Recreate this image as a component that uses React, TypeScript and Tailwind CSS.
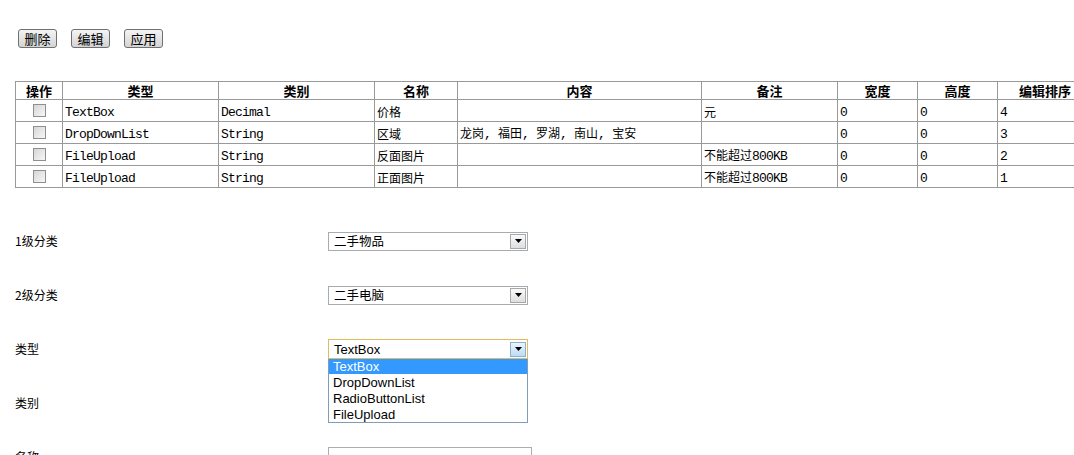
import React from "react";

type Row = {
  type: string;
  kind: string;
  name: string;
  content: string;
  note: string;
  width: string;
  height: string;
  order: string;
};

const rows: Row[] = [
  { type: "TextBox", kind: "Decimal", name: "价格", content: "", note: "元", width: "0", height: "0", order: "4" },
  { type: "DropDownList", kind: "String", name: "区域", content: "龙岗, 福田, 罗湖, 南山, 宝安", note: "", width: "0", height: "0", order: "3" },
  { type: "FileUpload", kind: "String", name: "反面图片", content: "", note: "不能超过800KB", width: "0", height: "0", order: "2" },
  { type: "FileUpload", kind: "String", name: "正面图片", content: "", note: "不能超过800KB", width: "0", height: "0", order: "1" },
];

const headers = ["操作", "类型", "类别", "名称", "内容", "备注", "宽度", "高度", "编辑排序"];

// Latin runs use a narrow mono face, CJK runs the CJK face
function Mix({ text }: { text: string }) {
  const parts = text.split(/([\x20-\x7e]+)/).filter((p) => p.length > 0);
  return (
    <>
      {parts.map((p, i) =>
        /^[\x20-\x7e]+$/.test(p) ? (
          <span
            key={i}
            className="font-['Liberation_Mono',monospace] text-[13px] tracking-[-0.8px] leading-[14px] whitespace-pre"
          >
            {p}
          </span>
        ) : (
          <span key={i} className="font-['Noto_Sans_CJK_SC',sans-serif] text-[12px] leading-[14px]">
            {p}
          </span>
        )
      )}
    </>
  );
}

function ToolButton({ label }: { label: string }) {
  return (
    <button className="w-[39px] h-[19px] flex items-center justify-center border border-[#707070] rounded-[3px] bg-linear-to-b from-[#f4f4f4] to-[#d4d4d4] text-[13px] leading-none text-black font-['Noto_Sans_CJK_SC',sans-serif]">
      {label}
    </button>
  );
}

function Checkbox() {
  return (
    <span className="block mx-auto w-[13px] h-[13px] border border-[#8e8f8f] bg-linear-to-br from-[#d6d6d6] to-[#f7f7f7]" />
  );
}

function Arrow({ active }: { active?: boolean }) {
  return (
    <span
      className={
        active
          ? "w-[16px] h-[15px] mr-[1px] flex items-center justify-center border border-[#8fb0d0] bg-linear-to-b from-[#eaf4fc] to-[#bcdcf4]"
          : "w-[16px] h-[15px] mr-[1px] flex items-center justify-center border border-[#a8a8a8] bg-linear-to-b from-[#fafafa] to-[#dedede]"
      }
    >
      <svg width="7" height="4" viewBox="0 0 7 4">
        <path d="M0 0 H7 L3.5 4 Z" fill="#000" />
      </svg>
    </span>
  );
}

function Select({ value }: { value: string }) {
  return (
    <div className="w-[200px] h-[19px] border border-[#a5acb2] bg-white flex items-center">
      <span className="flex-1 pl-[5px] text-[12.5px] leading-none text-black font-['Noto_Sans_CJK_SC',sans-serif]">
        {value}
      </span>
      <Arrow />
    </div>
  );
}

const typeOptions = ["TextBox", "DropDownList", "RadioButtonList", "FileUpload"];

function OpenSelect() {
  return (
    <div className="relative w-[200px]">
      <div className="w-[200px] h-[20px] border border-[#e1bc5c] bg-white flex items-center">
        <span className="flex-1 pl-[5px] text-[13px] leading-none text-black font-['Liberation_Sans',Arial,sans-serif]">
          TextBox
        </span>
        <Arrow active />
      </div>
      <ul className="absolute left-0 top-[20px] w-[200px] border border-[#7f9db9] border-t-0 bg-white z-10">
        {typeOptions.map((o, i) => (
          <li
            key={o}
            className={
              i === 0
                ? "h-[15px] pl-[4px] flex items-center bg-[#3399ff] text-white text-[13px] leading-none font-['Liberation_Sans',Arial,sans-serif]"
                : "h-[16px] pl-[4px] flex items-center text-black text-[13px] leading-none font-['Liberation_Sans',Arial,sans-serif]"
            }
          >
            {o}
          </li>
        ))}
      </ul>
    </div>
  );
}

function FormRow({ label, children }: { label: string; children: React.ReactNode }) {
  return (
    <div className="h-[54px] flex items-center pl-[15px]">
      <span className="w-[313px] text-[12px] leading-[14px] text-black font-['Noto_Sans_CJK_SC',sans-serif]">
        {label}
      </span>
      {children}
    </div>
  );
}

export default function App() {
  const cell =
    "border border-[#999999] h-[22px] px-[2px] py-0 text-left align-middle text-black leading-[14px] whitespace-nowrap overflow-hidden";
  return (
    <div className="w-screen h-screen overflow-hidden bg-white text-black font-['Noto_Sans_CJK_SC',sans-serif]">
      <div className="pt-[29px] pl-[18px] flex gap-[14px]">
        <ToolButton label="删除" />
        <ToolButton label="编辑" />
        <ToolButton label="应用" />
      </div>

      <div className="pl-[15px] mt-[33px]">
        <table className="table-fixed border-collapse w-[1077px] min-w-[1077px]">
          <colgroup>
            <col className="w-[47px]" />
            <col className="w-[156px]" />
            <col className="w-[156px]" />
            <col className="w-[83px]" />
            <col className="w-[244px]" />
            <col className="w-[136px]" />
            <col className="w-[80px]" />
            <col className="w-[80px]" />
            <col className="w-[95px]" />
          </colgroup>
          <thead>
            <tr>
              {headers.map((h) => (
                <th
                  key={h}
                  className="border border-[#999999] h-[18px] p-0 text-center align-middle text-[13px] leading-[14px] font-bold text-black font-['Noto_Sans_CJK_SC',sans-serif]"
                >
                  {h}
                </th>
              ))}
            </tr>
          </thead>
          <tbody>
            {rows.map((r, i) => (
              <tr key={i}>
                <td className="border border-[#999999] h-[22px] p-0 align-middle">
                  <Checkbox />
                </td>
                <td className={cell}><Mix text={r.type} /></td>
                <td className={cell}><Mix text={r.kind} /></td>
                <td className={cell}><Mix text={r.name} /></td>
                <td className={cell}><Mix text={r.content} /></td>
                <td className={cell}><Mix text={r.note} /></td>
                <td className={cell}><Mix text={r.width} /></td>
                <td className={cell}><Mix text={r.height} /></td>
                <td className={cell}><Mix text={r.order} /></td>
              </tr>
            ))}
          </tbody>
        </table>
      </div>

      <div className="mt-[26px]">
        <FormRow label="1级分类">
          <Select value="二手物品" />
        </FormRow>
        <FormRow label="2级分类">
          <Select value="二手电脑" />
        </FormRow>
        <FormRow label="类型">
          <OpenSelect />
        </FormRow>
        <FormRow label="类别">
          <Select value="" />
        </FormRow>
        <FormRow label="名称">
          <div className="w-[204px] h-[20px] border border-[#abadb3] bg-white" />
        </FormRow>
      </div>
    </div>
  );
}
